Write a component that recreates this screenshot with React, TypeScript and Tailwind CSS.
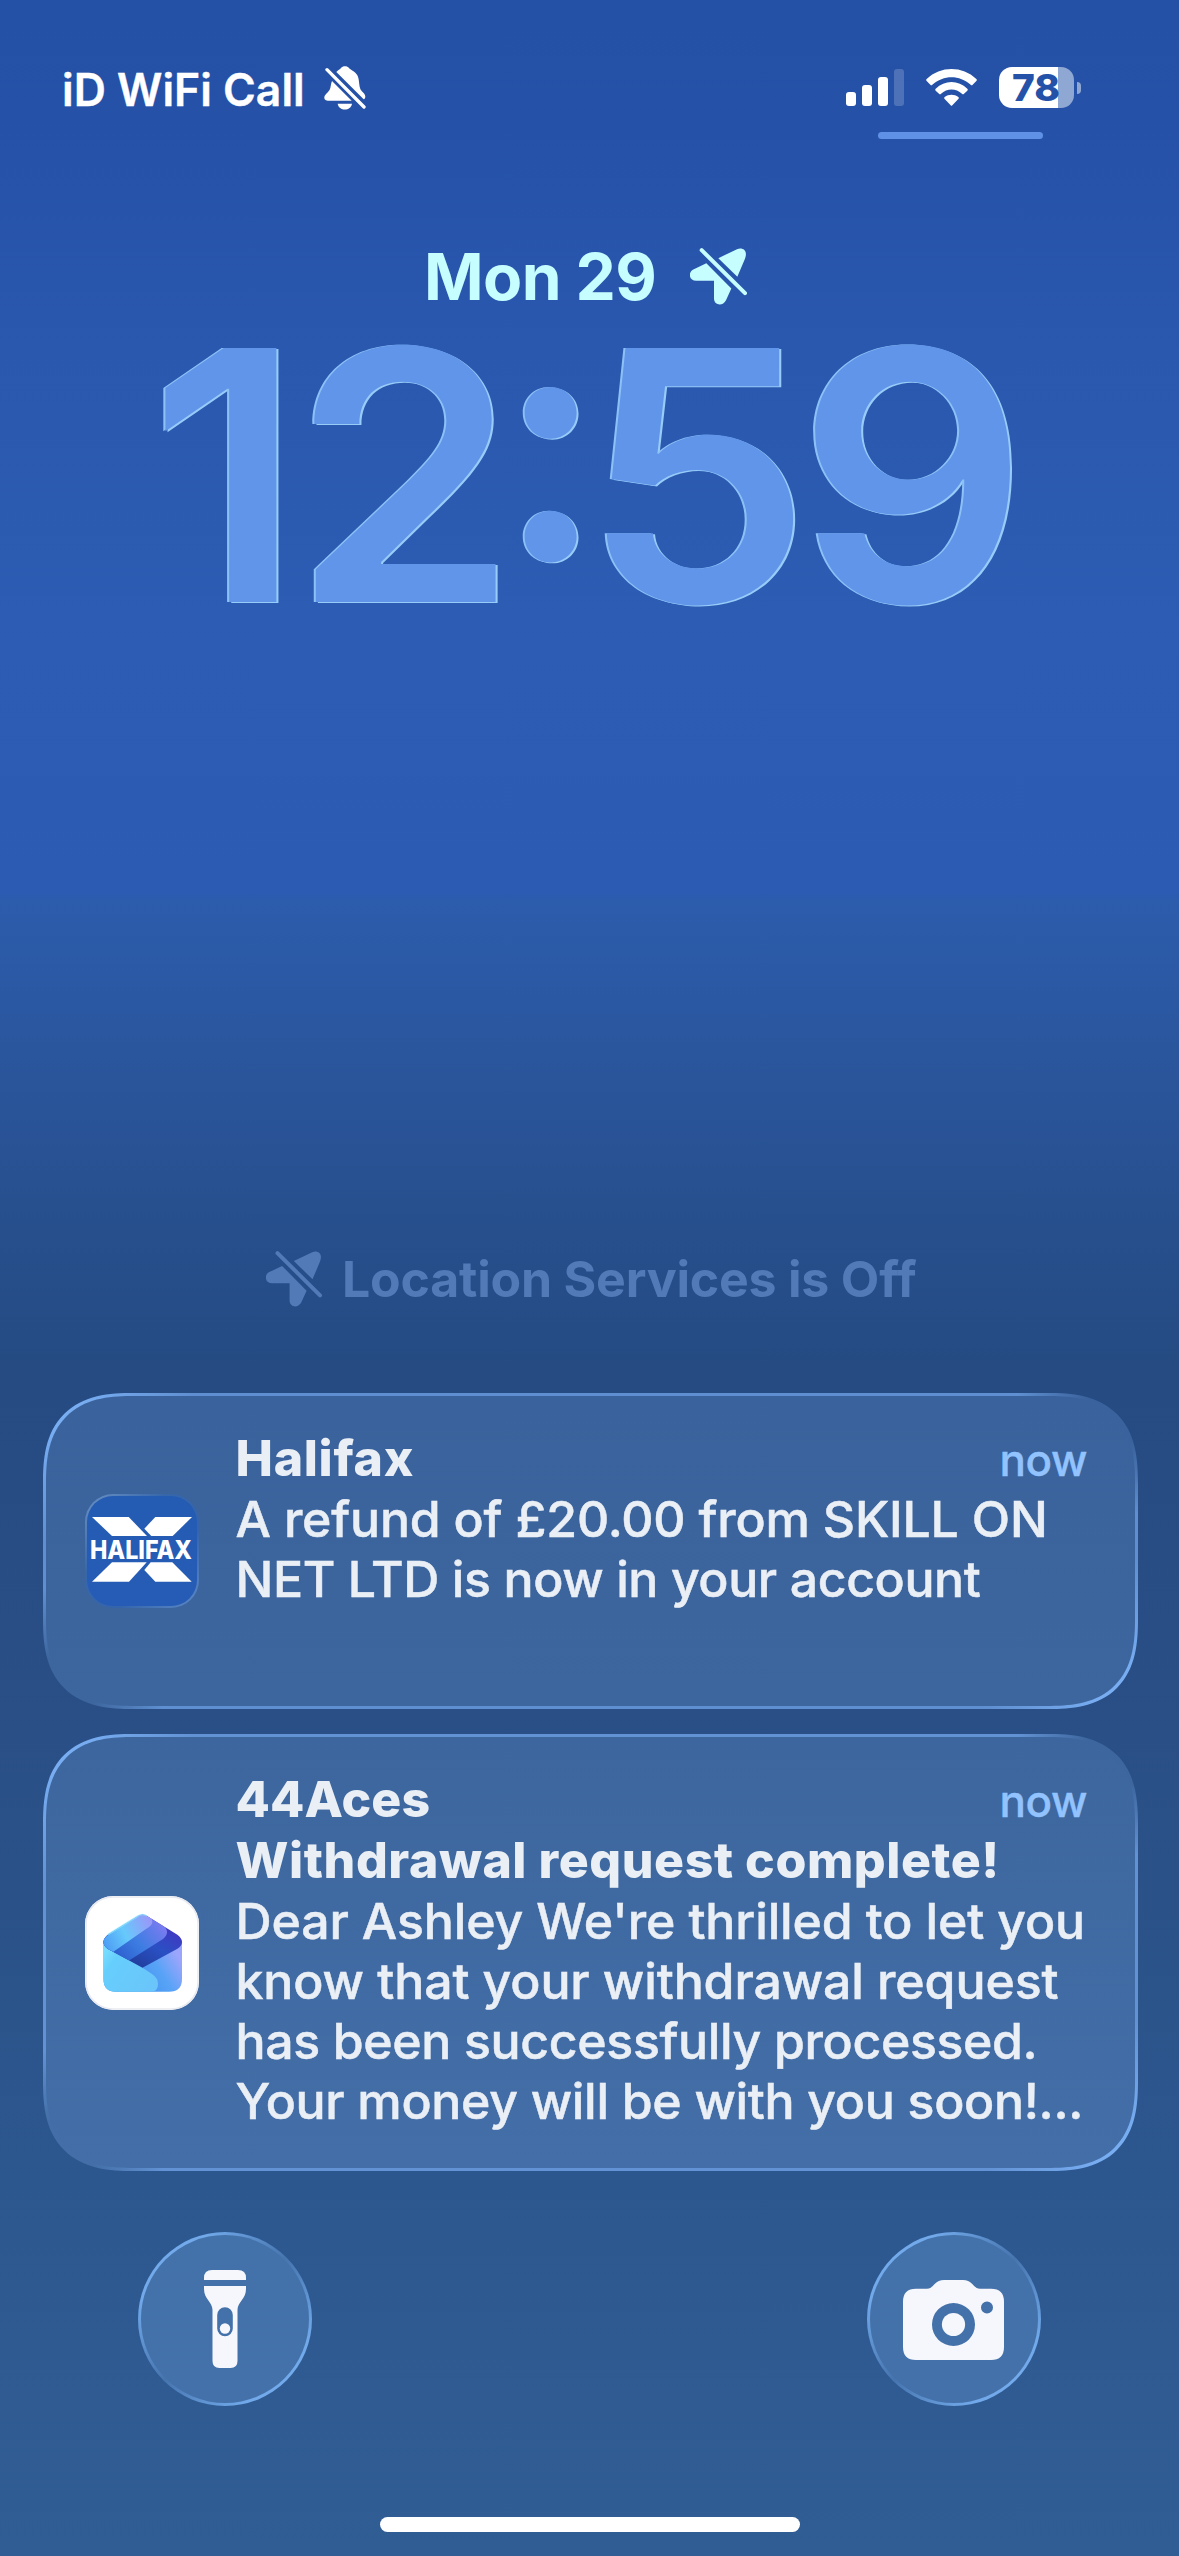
import React from 'react';

interface Line {
  text: string;
  tracking: string;
}

interface NotificationProps {
  icon: React.ReactNode;
  title: string;
  titleClass: string;
  time: string;
  subtitle?: Line;
  lines: Line[];
  className: string;
}

const BellSlashIcon = () => (
  <svg viewBox="0 0 126 132" className="h-11 w-[42px]" fill="currentColor">
    <path d="M37 18C42 12 48 11 51 6C56 -1 70 -1 75 6C79 12 92 14 100 28C107 41 104 60 110 71C115 78 124 83 124 92Q124 98 119 100Z" />
    <path d="M24 45L83 104H11C3 104 0 98 1 93C2 85 12 80 17 71C21 64 20 54 24 45Z" />
    <path d="M41 113H84C81 136 44 136 41 113Z" />
    <path d="M9 11L120 123" stroke="currentColor" strokeWidth="10" strokeLinecap="round" />
  </svg>
);

const LocationSlashIcon = ({ className }: { className: string }) => (
  <svg viewBox="0 0 171 170" className={className} fill="currentColor">
    <path d="M85 30L141 3C158 -3 171 7 167 24Q166 29 164 34L142 86Z" />
    <path d="M49 45L124 121L108 156C99 175 72 172 72 151V98H19C-3 98 -7 73 10 64Z" />
    <path d="M35 6L165 135" stroke="currentColor" strokeWidth="12" strokeLinecap="round" />
  </svg>
);

const SignalIcon = () => (
  <svg viewBox="0 0 58 37" className="h-[37px] w-[58px]" fill="white">
    <rect x="0" y="23" width="10" height="14" rx="3" />
    <rect x="16" y="16" width="10" height="21" rx="3" />
    <rect x="32" y="8" width="10" height="29" rx="3" />
    <rect x="48" y="0" width="10" height="37" rx="3" opacity="0.19" />
  </svg>
);

const WifiIcon = () => (
  <svg viewBox="0 0 153 111" className="h-[37px] w-[51px]" fill="white">
    <path d="M2 30C44 -10 109 -10 151 30Q154 33 151 36L140 47Q137 50 134 47C101 17 52 17 19 47Q16 50 13 47L2 36Q-1 33 2 30Z" />
    <path d="M29 59C56 32 97 32 124 59Q127 62 124 65L114 74Q111 77 108 74C90 57 63 57 45 74Q42 77 39 74L29 65Q26 62 29 59Z" />
    <path d="M56 84C68 75 85 75 97 84Q100 87 97 90L79 109Q76.500 112 74 109L56 90Q53 87 56 84Z" />
  </svg>
);

const HalifaxIcon = () => (
  <div className="h-[114px] w-[114px] shrink-0 rounded-[28px] border-2 border-transparent [background:linear-gradient(#245bb3,#265cb5)_padding-box,linear-gradient(135deg,#6b93c4,#3767ab_35%,#3464ac_65%,#5d8ac6)_border-box]">
    <svg viewBox="2 2 110 110" className="h-full w-full overflow-visible" fill="white">
      <path d="M7 23H43.700L62 42H27Z" />
      <path d="M70.300 23H107L87.700 42H66.300L59.300 34.700Z" />
      <path d="M27 68.300H61.700L44 87.700H7Z" />
      <path d="M65.700 68.300H87.300L106.700 87.700H70.300L59.300 76Z" />
      <text x="5" y="64.700" textLength="102" lengthAdjust="spacingAndGlyphs" className="font-['Inter',sans-serif] text-[25.700px] font-extrabold">HALIFAX</text>
    </svg>
  </div>
);

const AcesIcon = () => (
  <svg viewBox="0 0 114 114" className="h-[114px] w-[114px] shrink-0">
    <defs>
      <linearGradient id="front" x1="0" x2="1" y1="0" y2="0.600">
        <stop offset="0" stopColor="#7fe3ff" />
        <stop offset="0.300" stopColor="#66cefc" />
        <stop offset="1" stopColor="#6ac6fa" />
      </linearGradient>
      <linearGradient id="side" x1="0.300" x2="1" y1="0.800" y2="0.500">
        <stop offset="0" stopColor="#3d8fec" />
        <stop offset="0.600" stopColor="#57a3f7" />
        <stop offset="1" stopColor="#9aa5fb" />
      </linearGradient>
      <linearGradient id="flap" x1="0" x2="1" y1="0.600" y2="0.200">
        <stop offset="0" stopColor="#4a97f3" />
        <stop offset="0.450" stopColor="#66c9fb" />
        <stop offset="1" stopColor="#a191f8" />
      </linearGradient>
      <linearGradient id="band" x1="0" x2="1" y1="0.800" y2="0.200">
        <stop offset="0" stopColor="#2450c6" />
        <stop offset="0.500" stopColor="#3d7de2" />
        <stop offset="1" stopColor="#8b7bf4" />
      </linearGradient>
      <linearGradient id="fold" x1="0.300" x2="1" y1="1" y2="0.200">
        <stop offset="0" stopColor="#1f3a94" />
        <stop offset="0.500" stopColor="#2a50c4" />
        <stop offset="1" stopColor="#4a2fc2" />
      </linearGradient>
      <clipPath id="diamond">
        <path d="M53 20Q57.500 17 62 20L92 38.500Q97 42 97 46Q97 50 92 53L57.500 71.700L23 53Q18.500 50 18.500 46Q18.500 42 23 38.500Z" />
      </clipPath>
    </defs>
    <rect width="114" height="114" rx="28" fill="#fff" />
    <rect x="1" y="1" width="112" height="112" rx="27" fill="none" stroke="#e8eaf0" strokeWidth="1.500" />
    <path d="M18.500 45L57.500 40L97 45V83Q97 95.700 84 95.700H31Q18.500 95.700 18.500 83Z" fill="url(#side)" />
    <path d="M18.500 47L57.500 71.700L67 78Q73 82 73 88Q73 95.700 66 95.700H31Q18.500 95.700 18.500 83Z" fill="url(#front)" />
    <g clipPath="url(#diamond)">
      <rect x="18" y="17" width="80" height="56" fill="url(#fold)" />
      <path d="M10 50L57 10L76 28Q87 35 78 43L44 64.500L28 57Z" fill="url(#band)" />
      <path d="M10 50L57 10L64 20Q72 27 61 33L28 56Z" fill="url(#flap)" />
    </g>
    <path d="M23 38.500L53 20Q57.500 17 62 20" fill="none" stroke="#8fe6ff" strokeWidth="1.500" opacity="0.700" />
  </svg>
);

const FlashlightIcon = () => (
  <svg viewBox="0 0 42 98" className="h-[98px] w-[42px]" fill="#f5f7fc">
    <path d="M0 10V8Q0 0 8 0H34Q42 0 42 8V10Z" />
    <path
      fillRule="evenodd"
      d="M0 16H42V19C42 29 33.500 32 33.500 40V91Q33.500 98 26.500 98H15.500Q8.500 98 8.500 91V40C8.500 32 0 29 0 19ZM21 37.300A7.800 7.800 0 0 0 13.200 45.100V58.500A7.800 7.800 0 0 0 28.800 58.500V45.100A7.800 7.800 0 0 0 21 37.300Z"
    />
    <circle cx="21" cy="58.500" r="5.200" />
  </svg>
);

const CameraIcon = () => (
  <svg viewBox="0 0 101 80" className="mr-0.5 mt-0.5 h-20 w-[101px]" fill="#f5f7fc">
    <path
      fillRule="evenodd"
      d="M13 8.700H24C31 8.700 31 0 41 0H60C70 0 70 8.700 77 8.700H88Q101 8.700 101 21.700V67Q101 80 88 80H13Q0 80 0 67V21.700Q0 8.700 13 8.700ZM50.500 23A21.500 21.500 0 1 0 50.500 66A21.500 21.500 0 1 0 50.500 23ZM84 21.500A6 6 0 1 0 84 33.500A6 6 0 1 0 84 21.500Z"
    />
    <circle cx="50.500" cy="44.500" r="11.600" />
  </svg>
);

const StatusBar = () => (
  <header className="flex h-[108px] shrink-0 items-end pl-[62px] pr-[98px] text-white">
    <span className="mb-[-9px] w-[262px] whitespace-nowrap text-[44.500px] font-semibold leading-[54px] [-webkit-text-stroke:0.400px_white]">iD WiFi Call</span>
    <div className="mb-[-2px]">
      <BellSlashIcon />
    </div>
    <div className="ml-auto flex items-end">
      <div className="mb-0.5 mr-[22px]">
        <SignalIcon />
      </div>
      <div className="mb-0.5 mr-[22px]">
        <WifiIcon />
      </div>
      <div className="flex h-[41px] w-[75px] items-center rounded-[13px] bg-[linear-gradient(90deg,#fff_59px,#8fa8d3_59px)] pl-[13px]">
        <span className="origin-left scale-x-[1.050] text-[37px] font-extrabold leading-none text-[#2452a8]">78</span>
      </div>
      <div className="mb-3.5 ml-[3px] h-3 w-1 rounded-r-full bg-[#8fa8d3]" />
    </div>
  </header>
);

const Notification: React.FC<NotificationProps> = ({ icon, title, titleClass, time, subtitle, lines, className }) => (
  <article
    className={`flex items-center rounded-[74px] border-[3px] border-transparent pl-[39px] pr-[48px] supports-[corner-shape:squircle]:rounded-[90px] supports-[corner-shape:squircle]:[corner-shape:superellipse(1.38)] ${className}`}
  >
    {icon}
    <div className="ml-[36.500px] h-full min-w-0 flex-1 whitespace-nowrap pt-[32px] text-[50px] font-medium leading-[60px] text-[#eaeff6]">
      <div className="flex h-[61px] justify-between">
        <h2 className={`font-extrabold ${titleClass}`}>{title}</h2>
        <span className="pt-0.5 text-[44px] tracking-[-0.400px] text-[#92c3fe] [-webkit-text-stroke:0.400px_#92c3fe]">{time}</span>
      </div>
      {subtitle && <h3 className={`h-[61px] font-extrabold ${subtitle.tracking}`}>{subtitle.text}</h3>}
      {lines.map((line) => (
        <p key={line.text} className={`[-webkit-text-stroke:0.500px_#eaeff6] ${line.tracking}`}>
          {line.text}
        </p>
      ))}
    </div>
  </article>
);

const QuickButton = ({ children }: { children: React.ReactNode }) => (
  <button className="flex h-[174px] w-[174px] items-center justify-center rounded-full border-[3px] border-transparent [background:linear-gradient(#4371a9,#4471aa)_padding-box,linear-gradient(135deg,#75adef,#71a9ea_20%,#4674ae_50%,#71a9ea_80%,#75adef)_border-box]">
    {children}
  </button>
);

export default function App() {
  return (
    <main className="flex h-[2556px] w-[1179px] flex-col overflow-hidden bg-[linear-gradient(180deg,#2450a5_0px,#2552a8_120px,#2a58ae_350px,#2c5cb3_620px,#2b5bb2_894px,#2c5cac_900px,#2a559b_1080px,#264f8c_1230px,#254b82_1370px,#294f86_1730px,#2c578e_2180px,#315d95_2556px)] font-['Inter','Liberation_Sans',sans-serif]">
      <StatusBar />
      <div className="ml-[878px] mt-6 h-[7px] w-[165px] shrink-0 rounded-full bg-[#5f91e6]" />

      {/* Date and clock */}
      <div className="mt-[98px] flex h-[78px] shrink-0 items-center pl-[424px] text-[#c6fdff]">
        <span className="mt-[2px] text-[64px] font-bold leading-[78px] tracking-[-0.600px]">Mon 29</span>
        <div className="ml-auto mr-[432px]">
          <LocationSlashIcon className="h-[57px] w-[57px]" />
        </div>
      </div>
      <time className="mt-[5px] flex h-[310px] shrink-0 items-start pl-[152px] text-[349px] font-semibold leading-[310px] text-[#6095e9] [text-shadow:-2px_0_#8cc1f6,2px_1px_#97cbf8]">
        <span className="scale-x-[1.045]">1</span>
        <span className="-ml-[4px] scale-x-[1.035]">2</span>
        <span className="relative -top-[36px] -ml-[18px] -mr-[2px] scale-[0.950]">:</span>
        <span className="-ml-[17px] scale-x-[1.045]">5</span>
        <span className="-ml-[6px] scale-x-[1.035]">9</span>
      </time>

      <div className="mt-[609px] flex h-[80px] shrink-0 items-center pl-[266px] text-[#517ab7]">
        <LocationSlashIcon className="h-[56px] w-[56px]" />
        <span className="ml-[20px] whitespace-nowrap text-[50px] font-bold tracking-[-0.200px]">Location Services is Off</span>
      </div>

      <section className="ml-[43px] mt-[74px] flex w-[1095px] shrink-0 flex-col gap-[25px]">
        <Notification
          className="h-[316px] [background:linear-gradient(#3a629c,#3d669e)_padding-box,radial-gradient(circle_at_100%_0,#3a629c_50px,transparent_120px)_border-box,radial-gradient(circle_at_0_100%,#3d669e_50px,transparent_120px)_border-box,radial-gradient(circle_at_0_0,#78adf2_40px,transparent_150px)_border-box,radial-gradient(circle_at_100%_100%,#78adf2_40px,#5f8fd0_150px)_border-box]"
          icon={<HalifaxIcon />}
          title="Halifax"
          titleClass="tracking-[0.700px]"
          time="now"
          lines={[
            { text: 'A refund of £20.00 from SKILL ON', tracking: 'tracking-[-0.200px]' },
            { text: 'NET LTD is now in your account', tracking: 'tracking-[-0.400px]' },
          ]}
        />
        <Notification
          className="h-[437px] [background:linear-gradient(#3d669e,#436ea7)_padding-box,radial-gradient(circle_at_100%_0,#3d669e_50px,transparent_120px)_border-box,radial-gradient(circle_at_0_100%,#436ea7_50px,transparent_120px)_border-box,radial-gradient(circle_at_0_0,#78adf2_40px,transparent_150px)_border-box,radial-gradient(circle_at_100%_100%,#78adf2_40px,#6292d3_150px)_border-box]"
          icon={<AcesIcon />}
          title="44Aces"
          titleClass="tracking-[0.100px]"
          time="now"
          subtitle={{ text: 'Withdrawal request complete!', tracking: 'tracking-[0.560px]' }}
          lines={[
            { text: "Dear Ashley We're thrilled to let you", tracking: 'tracking-[-0.130px]' },
            { text: 'know that your withdrawal request', tracking: 'tracking-[-0.100px]' },
            { text: 'has been successfully processed.', tracking: 'tracking-[-0.360px]' },
            { text: 'Your money will be with you soon!...', tracking: 'tracking-[-0.310px]' },
          ]}
        />
      </section>

      <nav className="mt-[61px] flex shrink-0 justify-between px-[138px]">
        <QuickButton>
          <FlashlightIcon />
        </QuickButton>
        <QuickButton>
          <CameraIcon />
        </QuickButton>
      </nav>
      <div className="mt-[111px] h-[15px] w-[420px] shrink-0 self-center rounded-full bg-white" />
    </main>
  );
}
